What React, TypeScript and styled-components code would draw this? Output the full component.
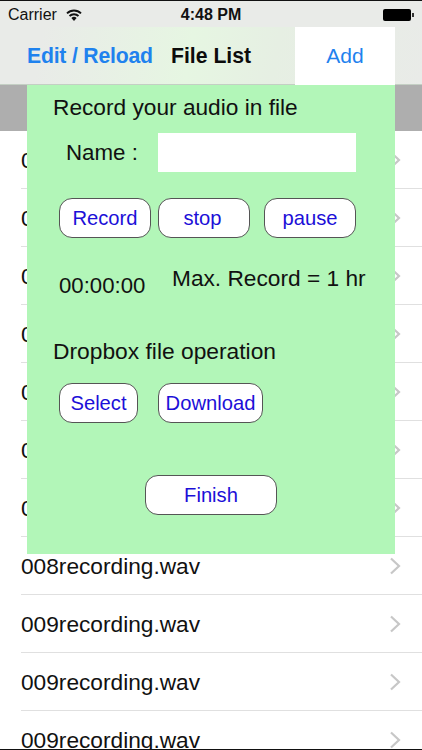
import React from "react";
import styled, { createGlobalStyle } from "styled-components";

const GlobalStyle = createGlobalStyle`
  html, body {
    margin: 0;
    padding: 0;
    background: #fff;
  }
  body {
    font-family: "Liberation Sans", Arial, sans-serif;
  }
`;

const Screen = styled.div`
  position: relative;
  width: 422px;
  height: 750px;
  overflow: hidden;
  background: #fff;
  color: #111;
  border-top: 1px solid #111;
  border-bottom: 1px solid #111;
  box-sizing: border-box;
`;

const StatusBar = styled.div`
  height: 26px;
  box-sizing: border-box;
  display: grid;
  grid-template-columns: 1fr auto 1fr;
  align-items: center;
  padding: 2px 8px 0 8px;
  background: #e9ebe8;
  font-size: 16px;
`;

const Carrier = styled.div`
  display: flex;
  align-items: center;
  gap: 9px;
`;

const Clock = styled.div`
  font-weight: 700;
  font-size: 16px;
`;

const Battery = styled.div`
  justify-self: end;
  display: flex;
  align-items: center;
  gap: 1px;
`;

const BatteryBody = styled.div`
  width: 28px;
  height: 12px;
  border-radius: 2px;
  background: #000;
`;

const BatteryCap = styled.div`
  width: 2px;
  height: 4px;
  background: #333;
`;

const NavBar = styled.div`
  height: 58px;
  display: flex;
  align-items: center;
  box-sizing: border-box;
  padding-left: 27px;
  border-bottom: 1px solid #c4cfc4;
  background: linear-gradient(100deg, #e9ebe8 10%, #e6f6e2 45%, #e6efe3 65%, #e9ebe8 100%);
`;

const NavAction = styled.div`
  color: #1f82ee;
  font-size: 21.2px;
  font-weight: 700;
  letter-spacing: -0.2px;
  width: 144px;
  padding-top: 1px;
  white-space: nowrap;
`;

const NavTitle = styled.div`
  font-size: 21.2px;
  font-weight: 700;
  color: #0c0c0c;
  width: 124px;
  padding-top: 1px;
  white-space: nowrap;
`;

const AddButton = styled.div`
  width: 100px;
  height: 58px;
  display: flex;
  align-items: center;
  justify-content: center;
  background: #fff;
  color: #1f82ee;
  font-size: 21px;
`;

const SectionHeader = styled.div`
  height: 46px;
  background: #aeaeae;
`;

const Row = styled.div`
  height: 58px;
  box-sizing: border-box;
  display: flex;
  align-items: center;
  justify-content: space-between;
  margin-left: 21px;
  padding: 1px 21px 0 0;
  border-bottom: 1px solid #e0e0e0;
  font-size: 22.7px;
`;

const Panel = styled.div`
  position: absolute;
  left: 27px;
  top: 84px;
  width: 368px;
  height: 469px;
  box-sizing: border-box;
  padding: 9px 26px 0 26px;
  background: #b2f6b8;
  display: flex;
  flex-direction: column;
`;

const PanelTitle = styled.div`
  font-size: 22.7px;
  line-height: 26px;
  white-space: nowrap;
`;

const NameRow = styled.div`
  margin-top: 13px;
  display: flex;
  align-items: center;
`;

const NameLabel = styled.div`
  width: 105px;
  padding-left: 13px;
  box-sizing: border-box;
  font-size: 22.3px;
`;

const NameInput = styled.div`
  width: 198px;
  height: 39px;
  background: #fff;
`;

const ButtonRow = styled.div<{ $gap: number; $top: number }>`
  display: flex;
  gap: ${(p) => p.$gap}px;
  margin-top: ${(p) => p.$top}px;
  padding-left: 6px;
`;

const PillButton = styled.div<{ $width: number; $gapRight?: number; $textShift?: number }>`
  width: ${(p) => p.$width}px;
  height: 40px;
  box-sizing: border-box;
  display: flex;
  align-items: center;
  justify-content: center;
  padding-right: ${(p) => p.$textShift ?? 0}px;
  background: #fff;
  border: 1px solid #555;
  border-radius: 13px;
  color: #1c0fd8;
  font-size: 20.2px;
  margin-right: ${(p) => p.$gapRight ?? 0}px;
`;

const TimerRow = styled.div`
  display: flex;
  margin-top: 27px;
  padding-left: 6px;
`;

const Timer = styled.div`
  width: 113px;
  margin-top: 8px;
  font-size: 22.2px;
  line-height: 26px;
`;

const MaxRecord = styled.div`
  font-size: 22.7px;
  line-height: 26px;
  white-space: nowrap;
`;

const SectionLabel = styled.div`
  margin-top: 39px;
  font-size: 22.8px;
  line-height: 26px;
  white-space: nowrap;
`;

const FinishRow = styled.div`
  display: flex;
  justify-content: center;
  margin-top: 52px;
`;

const names = [
  "001recording.wav",
  "002recording.wav",
  "003recording.wav",
  "004recording.wav",
  "005recording.wav",
  "006recording.wav",
  "007recording.wav",
  "008recording.wav",
  "009recording.wav",
  "009recording.wav",
  "009recording.wav",
];

const Chevron = () => (
  <svg width="12" height="18" viewBox="0 0 12 18">
    <path d="M2 1.5 L10 9 L2 16.5" fill="none" stroke="#c7c7c7" strokeWidth="2.2" />
  </svg>
);

const Wifi = () => (
  <svg width="16" height="12" viewBox="0 0 16 12">
    <path d="M1 4.4 A10 10 0 0 1 15 4.4" fill="none" stroke="#111" strokeWidth="1.9" />
    <path d="M3.5 7 A6.5 6.5 0 0 1 12.5 7" fill="none" stroke="#111" strokeWidth="1.9" />
    <path d="M8 12 L5.4 9 A3.6 3.6 0 0 1 10.6 9 Z" fill="#111" />
  </svg>
);

export default function App() {
  return (
    <Screen>
      <GlobalStyle />
      <StatusBar>
        <Carrier>
          Carrier
          <Wifi />
        </Carrier>
        <Clock>4:48 PM</Clock>
        <Battery>
          <BatteryBody />
          <BatteryCap />
        </Battery>
      </StatusBar>
      <NavBar>
        <NavAction>Edit / Reload</NavAction>
        <NavTitle>File List</NavTitle>
        <AddButton>Add</AddButton>
      </NavBar>
      <SectionHeader />
      {names.map((name, i) => (
        <Row key={i}>
          {name}
          <Chevron />
        </Row>
      ))}
      <Panel>
        <PanelTitle>Record your audio in file</PanelTitle>
        <NameRow>
          <NameLabel>Name :</NameLabel>
          <NameInput />
        </NameRow>
        <ButtonRow $gap={7} $top={26}>
          <PillButton $width={92}>Record</PillButton>
          <PillButton $width={92} $gapRight={7} $textShift={3}>stop</PillButton>
          <PillButton $width={92}>pause</PillButton>
        </ButtonRow>
        <TimerRow>
          <Timer>00:00:00</Timer>
          <MaxRecord>Max. Record = 1 hr</MaxRecord>
        </TimerRow>
        <SectionLabel>Dropbox file operation</SectionLabel>
        <ButtonRow $gap={20} $top={19}>
          <PillButton $width={79}>Select</PillButton>
          <PillButton $width={105}>Download</PillButton>
        </ButtonRow>
        <FinishRow>
          <PillButton $width={132}>Finish</PillButton>
        </FinishRow>
      </Panel>
    </Screen>
  );
}
